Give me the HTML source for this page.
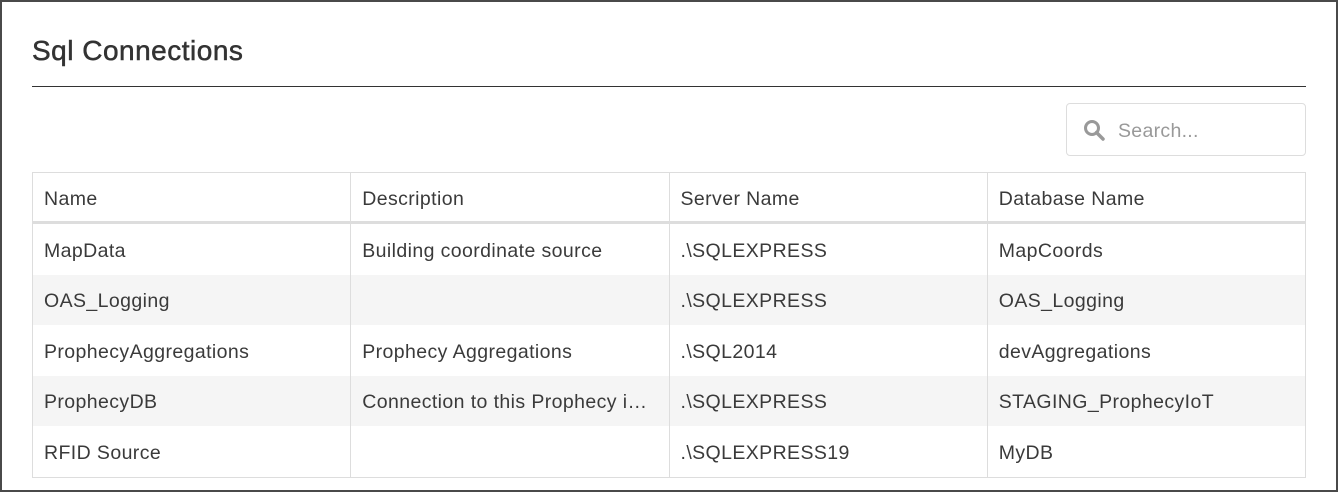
<!DOCTYPE html>
<html><head><style>
body{margin:0;width:1338px;height:492px;overflow:hidden;background:#fff;font-family:"Liberation Sans",sans-serif;}
.frame{position:absolute;left:0;top:0;width:1334px;height:488px;border:2px solid #4a4a4a;}
h1{position:absolute;left:32px;top:35px;margin:0;font-size:28px;font-weight:normal;color:#333;-webkit-text-stroke:0.5px #333;letter-spacing:0.5px;}
.hr{position:absolute;left:32px;top:86px;width:1274px;height:1px;background:#333;}
.search{position:absolute;left:1066px;top:103px;width:238px;height:51px;border:1px solid #ddd;border-radius:4px;}
.search span{position:absolute;left:51px;top:16px;font-size:19.5px;letter-spacing:0.3px;color:#999;}
.search svg{position:absolute;left:16px;top:15px;}
table{position:absolute;left:32px;top:172px;width:1274px;border-collapse:collapse;table-layout:fixed;font-size:19.5px;letter-spacing:0.4px;color:#3a3a3a;border:1px solid #ddd;}
td,th{border-left:1px solid #ddd;border-right:1px solid #ddd;padding:4px 11px 0;text-align:left;font-weight:normal;white-space:nowrap;overflow:hidden;text-overflow:ellipsis;}
th{height:44px;border-bottom:3px solid #ddd;}
td{height:46.5px;}
tr.s td{background:#f5f5f5;}
</style></head><body>
<div class="frame"></div>
<h1>Sql Connections</h1>
<div class="hr"></div>
<div class="search"><svg width="22" height="22" viewBox="0 0 22 22"><circle cx="9" cy="9" r="6.5" fill="none" stroke="#999" stroke-width="3"/><path d="M13.5 13.5L20 20" stroke="#999" stroke-width="3.5" stroke-linecap="round"/></svg><span>Search...</span></div>
<table>
<tr><th>Name</th><th>Description</th><th>Server Name</th><th>Database Name</th></tr>
<tr><td>MapData</td><td>Building coordinate source</td><td>.\SQLEXPRESS</td><td>MapCoords</td></tr>
<tr class="s"><td>OAS_Logging</td><td></td><td>.\SQLEXPRESS</td><td>OAS_Logging</td></tr>
<tr><td>ProphecyAggregations</td><td>Prophecy Aggregations</td><td>.\SQL2014</td><td>devAggregations</td></tr>
<tr class="s"><td>ProphecyDB</td><td>Connection to this Prophecy instance</td><td>.\SQLEXPRESS</td><td>STAGING_ProphecyIoT</td></tr>
<tr><td>RFID Source</td><td></td><td>.\SQLEXPRESS19</td><td>MyDB</td></tr>
</table>
</body></html>
